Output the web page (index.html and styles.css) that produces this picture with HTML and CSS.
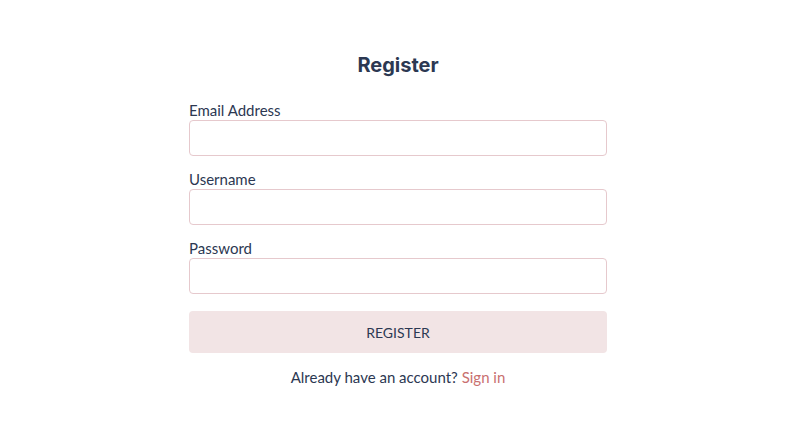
FILE: index.html
```html
<!DOCTYPE html>
<html>
<head>
<meta charset="utf-8">
<link rel="stylesheet" href="styles.css">
</head>
<body>
<main class="page">
  <form class="card">
    <h1 class="title">Register</h1>
    <div class="field">
      <label class="label">Email Address</label>
      <input class="input" type="text">
    </div>
    <div class="field">
      <label class="label">Username</label>
      <input class="input" type="text">
    </div>
    <div class="field">
      <label class="label">Password</label>
      <input class="input" type="password">
    </div>
    <button class="btn" type="button">REGISTER</button>
    <p class="footer">Already have an account? <a class="link" href="#">Sign in</a></p>
  </form>
</main>
</body>
</html>
```

FILE: styles.css
```css
html, body {
  margin: 0;
  padding: 0;
  background: #ffffff;
}
body {
  font-family: Lato, "Noto Sans", sans-serif;
  color: #2c3852;
}
.page {
  display: flex;
  justify-content: center;
  padding-top: 52px;
  padding-right: 4px;
}
.card {
  width: 418px;
  display: flex;
  flex-direction: column;
}
.title {
  margin: 0 0 23px;
  text-align: center;
  font-family: Inter, sans-serif;
  font-size: 20px;
  font-weight: 700;
  line-height: 26px;
  color: #2c3852;
}
.field {
  display: flex;
  flex-direction: column;
  margin-bottom: 14px;
}
.label {
  font-size: 15px;
  line-height: 19px;
  color: #2c3852;
}
.input {
  height: 36px;
  box-sizing: border-box;
  border: 1px solid #e6c9cd;
  border-radius: 4px;
  background: #fff;
  margin: 0;
}
.btn {
  margin-top: 3px;
  height: 42px;
  border: none;
  border-radius: 4px;
  background: #f2e4e5;
  color: #2c3852;
  font-family: inherit;
  font-size: 14px;
}
.footer {
  margin: 14px 0 0;
  text-align: center;
  font-size: 15px;
  line-height: 20px;
}
.link {
  color: #c9706f;
  text-decoration: none;
}
```
